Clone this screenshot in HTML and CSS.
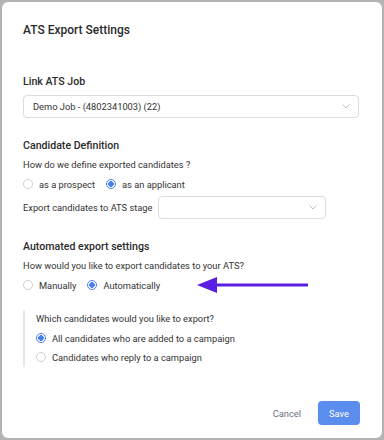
FILE: index.html
```html
<!DOCTYPE html>
<html lang="en">
<head>
    <meta charset="UTF-8">
    <meta name="viewport" content="width=device-width, initial-scale=1.0">
    <title>ATS Export Settings</title>
    <link rel="stylesheet" href="styles.css">
</head>
<body>
    <div class="modal">
        <h2 class="title">ATS Export Settings</h2>

        <!-- Link ATS Job -->
        <h3 class="section">Link ATS Job</h3>
        <div class="select wide">
            <span>Demo Job - (4802341003) (22)</span>
            <svg class="chev" width="8" height="5" viewBox="0 0 8 5"><path d="M0.5 0.5 L4 4 L7.5 0.5" fill="none" stroke="#b8b8b8" stroke-width="0.9"/></svg>
        </div>

        <!-- Candidate Definition -->
        <h3 class="section gap">Candidate Definition</h3>
        <p class="hint">How do we define exported candidates ?</p>
        <div class="radios">
            <label class="radio"><span class="dot"></span>as a prospect</label>
            <label class="radio"><span class="dot on"></span>as an applicant</label>
        </div>
        <div class="stage">
            <span>Export candidates to ATS stage</span>
            <div class="select short">
                <span></span>
                <svg class="chev" width="8" height="5" viewBox="0 0 8 5"><path d="M0.5 0.5 L4 4 L7.5 0.5" fill="none" stroke="#b8b8b8" stroke-width="0.9"/></svg>
            </div>
        </div>

        <!-- Automated export -->
        <h3 class="section gap">Automated export settings</h3>
        <p class="hint">How would you like to export candidates to your ATS?</p>
        <div class="radios">
            <label class="radio"><span class="dot"></span>Manually</label>
            <label class="radio"><span class="dot on"></span>Automatically</label>
        </div>

        <div class="which">
            <p class="hint">Which candidates would you like to export?</p>
            <label class="radio row"><span class="dot on"></span>All candidates who are added to a campaign</label>
            <label class="radio row"><span class="dot"></span>Candidates who reply to a campaign</label>
        </div>

        <div class="footer">
            <button type="button" class="btn-cancel">Cancel</button>
            <button type="button" class="btn-save">Save</button>
        </div>

        <!-- annotation arrow -->
        <svg class="arrow" width="112" height="18" viewBox="0 0 112 18">
            <path d="M17 9 H111" stroke="#5a1fe0" stroke-width="3"/>
            <path d="M0 9 L20 1 L20 17 Z" fill="#5a1fe0"/>
        </svg>
    </div>
</body>
</html>
```

FILE: styles.css
```css
body, html {
    margin: 0;
    padding: 0;
    height: 100%;
    background-color: #b3b3b3;
    font-family: Roboto, "Liberation Sans", sans-serif;
    color: #333;
}
.modal {
    position: relative;
    box-sizing: border-box;
    margin: 2px;
    height: 436px;
    padding: 18px 22px 13px 21px;
    background-color: white;
    border-radius: 6px;
    display: flex;
    flex-direction: column;
}
.title {
    margin: 0;
    font-size: 12px;
    font-weight: 500;
    line-height: 20px;
    color: #2b2b2b;
}
.section {
    margin: 33px 0 0;
    font-size: 10.6px;
    font-weight: 500;
    line-height: 18px;
    color: #2b2b2b;
}
.section.gap {
    margin-top: 19px;
}
.select {
    box-sizing: border-box;
    height: 23px;
    border: 1px solid #dcdcdc;
    border-radius: 4px;
    display: flex;
    align-items: center;
    justify-content: space-between;
    padding: 0 8px 0 9px;
    font-size: 9.3px;
    color: #333;
}
.select.wide {
    margin-top: 4px;
    margin-right: 1px;
}
.select.short {
    width: 168px;
}
.hint {
    margin: 2px 0 0;
    font-size: 9.3px;
    line-height: 16px;
    color: #333;
}
.radios {
    margin-top: 3px;
    display: flex;
    gap: 11px;
}
.radio {
    display: flex;
    align-items: center;
    gap: 6px;
    height: 16px;
    font-size: 9.3px;
    color: #333;
}
.dot {
    box-sizing: border-box;
    width: 10px;
    height: 10px;
    border: 1px solid #d0d0d0;
    border-radius: 50%;
    background: white;
}
.dot.on {
    border-color: #4a80ee;
    background: radial-gradient(circle, #4a80ee 0 2.6px, white 3px);
}
.stage {
    margin-top: 4px;
    display: flex;
    align-items: center;
    gap: 6px;
    font-size: 9.3px;
}
.which {
    margin-top: 17px;
    border-left: 2px solid #e6e6e6;
    padding: 1px 0 2px 11px;
}
.which .hint {
    margin: 0;
}
.radio.row {
    margin-top: 3px;
}
.footer {
    margin-top: auto;
    display: flex;
    justify-content: flex-end;
    align-items: center;
    gap: 17px;
}
.btn-cancel {
    border: none;
    background: none;
    font-family: inherit;
    font-size: 9.3px;
    color: #6b6f80;
    padding: 0;
}
.btn-save {
    border: none;
    border-radius: 4px;
    background-color: #5b8def;
    color: white;
    font-family: inherit;
    font-size: 9.3px;
    width: 42px;
    height: 24px;
    padding: 0;
}
.arrow {
    position: absolute;
    left: 195px;
    top: 274px;
}
```
